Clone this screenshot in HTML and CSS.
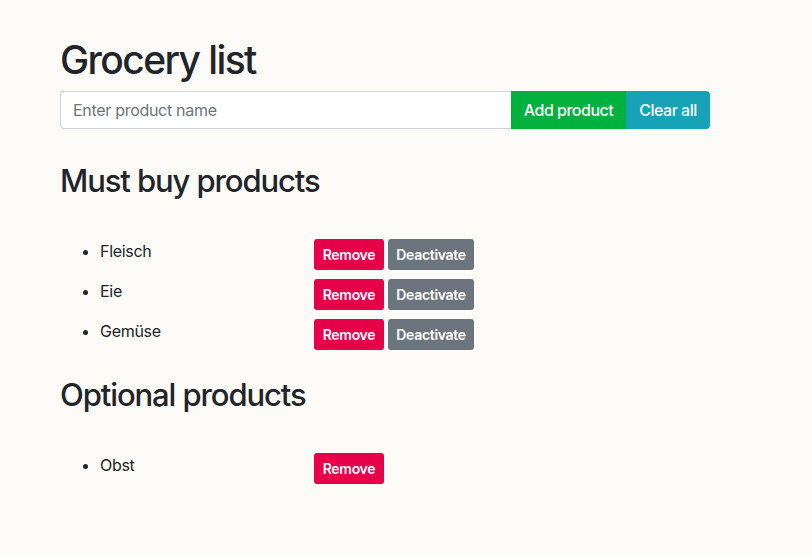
FILE: index.html
```html
<!DOCTYPE html>
<html lang="en">
<head>
<meta charset="utf-8">
<title>Grocery list</title>
<link rel="stylesheet" href="styles.css">
</head>
<body>
<div class="container">
  <h1 class="title">Grocery list</h1>
  <div class="input-group">
    <input class="form-control" type="text" placeholder="Enter product name">
    <button class="btn btn-add">Add product</button>
    <button class="btn btn-clear">Clear all</button>
  </div>

  <h2 class="section-title section-first">Must buy products</h2>
  <ul class="products">
    <li class="product"><div class="row"><span class="name">Fleisch</span><button class="btn-sm btn-remove">Remove</button><button class="btn-sm btn-deactivate">Deactivate</button></div></li>
    <li class="product"><div class="row"><span class="name">Eie</span><button class="btn-sm btn-remove">Remove</button><button class="btn-sm btn-deactivate">Deactivate</button></div></li>
    <li class="product"><div class="row"><span class="name">Gemüse</span><button class="btn-sm btn-remove">Remove</button><button class="btn-sm btn-deactivate">Deactivate</button></div></li>
  </ul>

  <h2 class="section-title">Optional products</h2>
  <ul class="products">
    <li class="product"><div class="row"><span class="name">Obst</span><button class="btn-sm btn-remove">Remove</button></div></li>
  </ul>
</div>
</body>
</html>
```

FILE: styles.css
```css
html, body {
  margin: 0;
  padding: 0;
}
body {
  background: #fcfbf8;
  color: #212529;
  font-family: Inter, "Noto Sans", sans-serif;
  font-size: 16px;
  line-height: 1.5;
}
.container {
  width: 650px;
  padding: 37px 0 0 60px;
}
.title {
  font-size: 39px;
  font-weight: 500;
  line-height: 1.2;
  margin: 0 0 7px 0;
  letter-spacing: -1.6px;
}
.input-group {
  display: flex;
  height: 38px;
}
.form-control {
  flex: 1;
  min-width: 0;
  box-sizing: border-box;
  height: 38px;
  border: 1px solid #ced4da;
  border-right: none;
  border-radius: 4px 0 0 4px;
  padding: 6px 12px;
  font-family: inherit;
  font-size: 16px;
  letter-spacing: -0.3px;
  color: #495057;
  background: #fff;
  outline: none;
}
.form-control::placeholder {
  color: #6c757d;
}
.btn {
  border: none;
  font-family: inherit;
  font-size: 16px;
  font-weight: 500;
  color: #fff;
  padding: 0;
  height: 38px;
  white-space: nowrap;
  letter-spacing: -0.5px;
}
.btn-add {
  background: #00b13e;
  width: 115px;
}
.btn-clear {
  background: #17a2b8;
  border-radius: 0 4px 4px 0;
  width: 84px;
}
.section-title {
  font-size: 31px;
  font-weight: 500;
  line-height: 1.2;
  margin: 26px 0 0 0;
  letter-spacing: -1.1px;
}
.section-first {
  margin-top: 33px;
}
.products {
  margin: 40px 0 0 0;
  padding: 0 0 0 40px;
}
.product {
  margin-bottom: 9px;
}
.row {
  display: flex;
  align-items: flex-start;
  gap: 4px;
}
.name {
  width: 210px;
  line-height: 24px;
  letter-spacing: -0.3px;
}
.btn-sm {
  border: none;
  border-radius: 3px;
  font-family: inherit;
  font-size: 14px;
  font-weight: 600;
  color: #fff;
  height: 31px;
  padding: 0;
  white-space: nowrap;
  letter-spacing: -0.3px;
}
.btn-remove {
  background: #e6004a;
  width: 70px;
}
.btn-deactivate {
  background: #6c757d;
  width: 86px;
}
```
